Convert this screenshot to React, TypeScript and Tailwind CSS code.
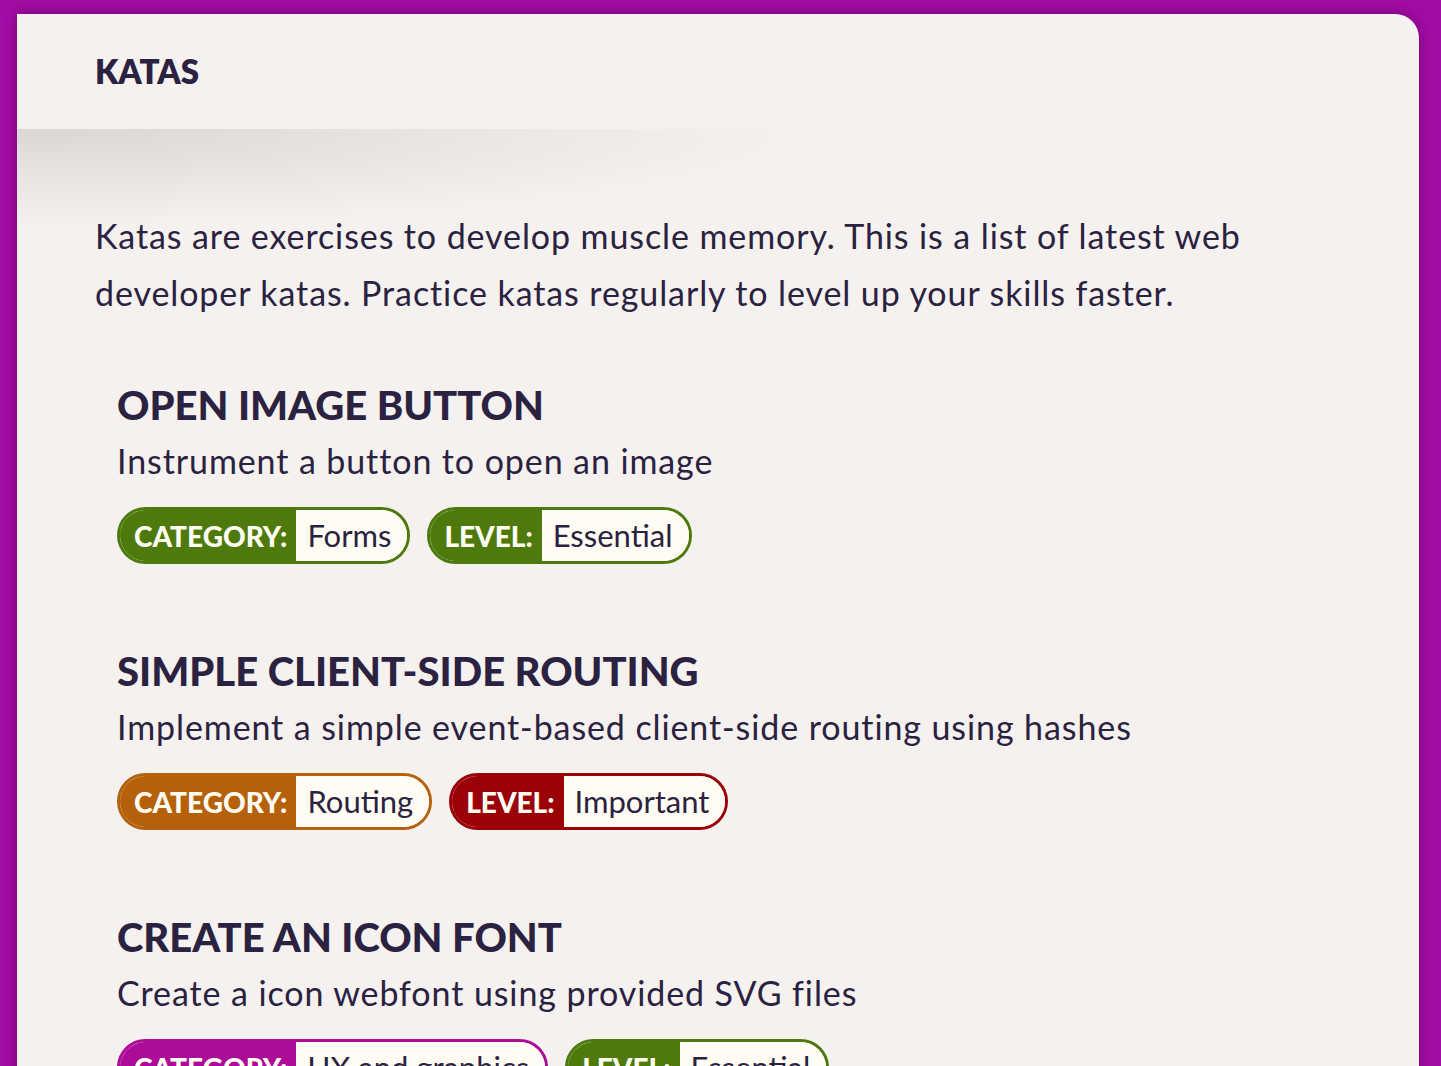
import React from "react";

type Tag = { label: string; value: string; color: string };
type Kata = { title: string; desc: string; tags: Tag[] };

const GREEN = "green";
const ORANGE = "orange";
const RED = "red";
const MAGENTA = "magenta";

const katas: Kata[] = [
  {
    title: "OPEN IMAGE BUTTON",
    desc: "Instrument a button to open an image",
    tags: [
      { label: "CATEGORY:", value: "Forms", color: GREEN },
      { label: "LEVEL:", value: "Essential", color: GREEN },
    ],
  },
  {
    title: "SIMPLE CLIENT-SIDE ROUTING",
    desc: "Implement a simple event-based client-side routing using hashes",
    tags: [
      { label: "CATEGORY:", value: "Routing", color: ORANGE },
      { label: "LEVEL:", value: "Important", color: RED },
    ],
  },
  {
    title: "CREATE AN ICON FONT",
    desc: "Create a icon webfont using provided SVG files",
    tags: [
      { label: "CATEGORY:", value: "UX and graphics", color: MAGENTA },
      { label: "LEVEL:", value: "Essential", color: GREEN },
    ],
  },
];

function Badge({ tag }: { tag: Tag }) {
  const border =
    tag.color === GREEN
      ? "border-[#4e7a0d]"
      : tag.color === ORANGE
      ? "border-[#b5610c]"
      : tag.color === RED
      ? "border-[#9a0208]"
      : "border-[#ad0c98]";
  const bg =
    tag.color === GREEN
      ? "bg-[#4e7a0d]"
      : tag.color === ORANGE
      ? "bg-[#b5610c]"
      : tag.color === RED
      ? "bg-[#9a0208]"
      : "bg-[#ad0c98]";
  return (
    <div className={`flex h-[57px] items-stretch overflow-hidden rounded-full border-[3px] ${border}`}>
      <span className={`flex items-center pl-[14px] pr-[9px] text-[28px] font-black text-[#fffcf2] ${bg}`}>
        {tag.label}
      </span>
      <span className="flex items-center bg-[#fffcf3] pl-[11px] pr-[16px] text-[31px] text-[#2a2240]">
        {tag.value}
      </span>
    </div>
  );
}

export default function App() {
  return (
    <div
      className="h-[1066px] overflow-hidden bg-[#a10ca3] pl-[17px] pr-[22px] pt-[14px]"
      style={{ fontFamily: "Lato, 'Noto Sans', sans-serif" }}
    >
      <div className="min-h-[1100px] rounded-tr-[24px] bg-[#f4f1ef] text-[#2a2240] shadow-[0_0_12px_rgba(60,0,60,0.45)]">
        <header className="relative flex h-[115px] items-center pl-[78px]">
          <h1 className="text-[33px] font-extrabold">KATAS</h1>
          <div className="pointer-events-none absolute left-0 top-full h-[95px] w-[780px] bg-[radial-gradient(ellipse_at_top_left,rgba(0,0,0,0.11),rgba(0,0,0,0.04)_45%,transparent_72%)]" />
        </header>
        <main className="pl-[78px] pr-[100px] pt-[78px]">
          <p className="text-[34px] leading-[57px] tracking-[0.9px]">
            Katas are exercises to develop muscle memory. This is a list of latest web developer katas. Practice
            katas regularly to level up your skills faster.
          </p>
          <div className="mt-[60px] flex flex-col gap-[83px] pl-[22px]">
            {katas.map((k) => (
              <article key={k.title}>
                <h2 className="text-[40px] font-black leading-[48px]">{k.title}</h2>
                <p className="mt-[7px] text-[34px] leading-[50px] tracking-[0.9px]">{k.desc}</p>
                <div className="mt-[21px] flex gap-[17px]">
                  {k.tags.map((t) => (
                    <Badge key={t.label} tag={t} />
                  ))}
                </div>
              </article>
            ))}
          </div>
        </main>
      </div>
    </div>
  );
}
